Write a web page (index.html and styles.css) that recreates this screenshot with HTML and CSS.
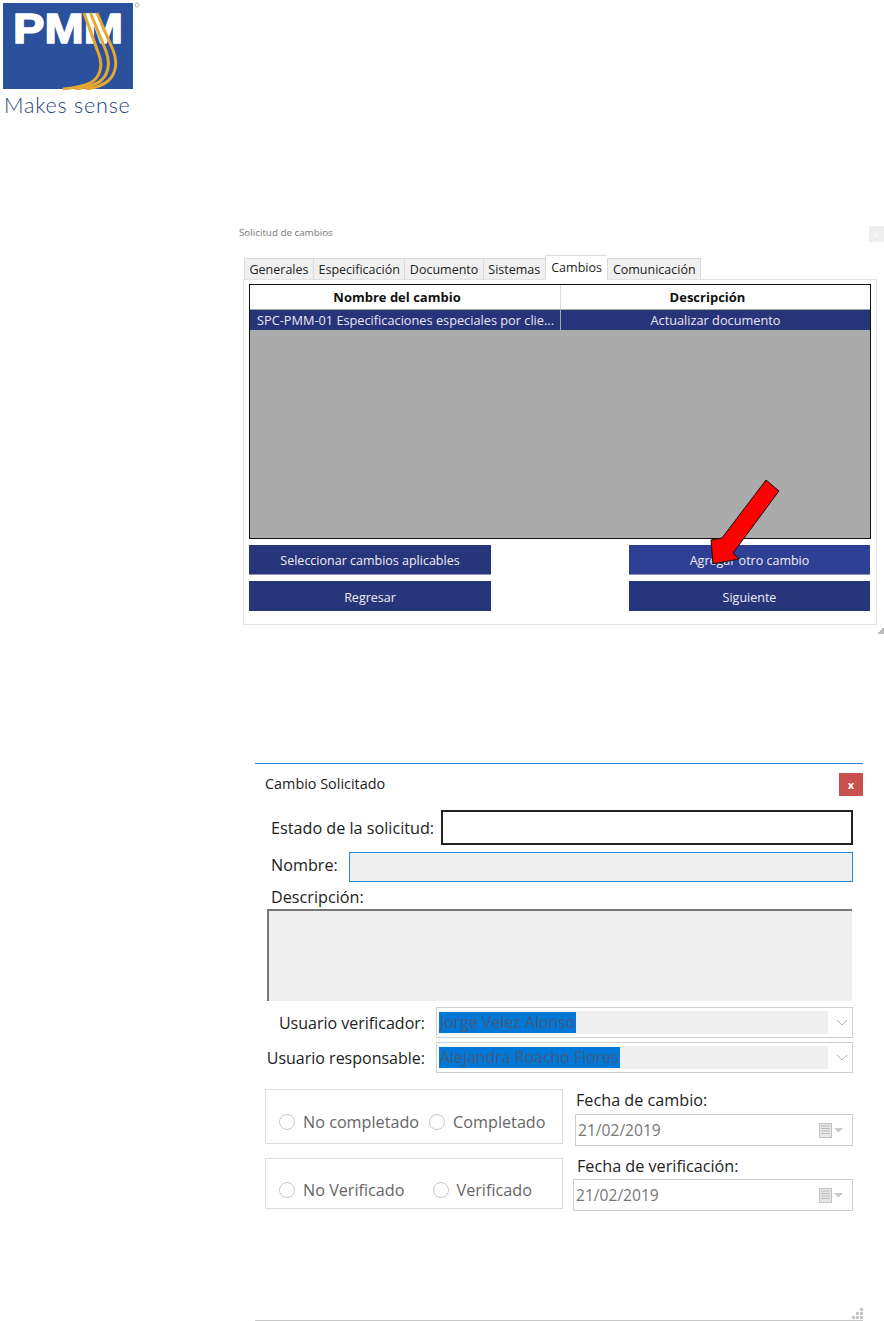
FILE: index.html
```html
<!DOCTYPE html>
<html lang="es">
<head>
<meta charset="UTF-8">
<meta name="viewport" content="width=device-width, initial-scale=1.0">
<title>Solicitud de cambios</title>
<link rel="stylesheet" href="styles.css">
</head>
<body>

<div class="logo">
  <svg class="logo-mark" width="140" height="90" viewBox="0 0 140 90">
    <rect x="3" y="3" width="130" height="86" fill="#2b509c"/>
    <text class="logo-pmm" x="13" y="43" textLength="110" lengthAdjust="spacingAndGlyphs">PMM</text>
    <g fill="none" stroke="#e5a931" stroke-width="3">
      <path d="M84 13 L98 52 C104 66 100 78 90 83 C82 87 72 88 63 89"/>
      <path d="M90.5 13 L106 51 C111 64 108 76 99 82 C92 86 84 88 75 89"/>
      <path d="M97 13 L113 50 C118 62 116 74 108 81 C102 86 94 88 86 89"/>
    </g>
    <circle cx="137" cy="5" r="2" fill="none" stroke="#999" stroke-width="0.7"/>
  </svg>
  <div class="logo-text">Makes sense</div>
</div>

<div class="win-one">
  <div class="win-one-head">
    <span class="win-one-title">Solicitud de cambios</span>
    <span class="win-one-close">x</span>
  </div>
  <div class="tabs">
    <div class="tab">Generales</div>
    <div class="tab">Especificación</div>
    <div class="tab">Documento</div>
    <div class="tab">Sistemas</div>
    <div class="tab active">Cambios</div>
    <div class="tab">Comunicación</div>
  </div>
  <div class="panel">
    <div class="table">
      <div class="table-row table-head">
        <div class="cell">Nombre del cambio</div>
        <div class="cell">Descripción</div>
      </div>
      <div class="table-row table-sel">
        <div class="cell left">SPC-PMM-01 Especificaciones especiales por clie...</div>
        <div class="cell">Actualizar documento</div>
      </div>
    </div>
    <div class="buttons">
      <button class="btn top">Seleccionar cambios aplicables</button>
      <button class="btn top hover">Agregar otro cambio</button>
      <button class="btn low">Regresar</button>
      <button class="btn low">Siguiente</button>
    </div>
  </div>
  <div class="grip-row">
    <svg class="grip" width="6" height="6" viewBox="0 0 6 6"><path d="M4 0h2v2H4zM2 2h2v2H2zM4 2h2v2H4zM0 4h2v2H0zM2 4h2v2H2zM4 4h2v2H4z" fill="#bbb"/></svg>
  </div>
</div>

<svg class="arrow" width="80" height="95" viewBox="705 475 80 95">
  <path d="M766 480 L779 491 L733 553 L739 559 L713 564 L711 540 L722 538 Z" fill="#ff0000" stroke="#111" stroke-width="1"/>
</svg>

<div class="win-two">
  <div class="win-two-head">
    <span class="win-two-title">Cambio Solicitado</span>
    <span class="win-two-close">x</span>
  </div>
  <div class="row row-estado">
    <label class="lbl">Estado de la solicitud:</label>
    <div class="input input-black"></div>
  </div>
  <div class="row row-nombre">
    <label class="lbl">Nombre:</label>
    <div class="input input-blue"></div>
  </div>
  <div class="lbl lbl-desc">Descripción:</div>
  <div class="textarea"></div>
  <div class="row row-combo">
    <label class="lbl lbl-right">Usuario verificador:</label>
    <div class="combo">
      <div class="combo-fill"><span class="combo-sel">Jorge Velez Alonso</span></div>
      <svg class="chevron" width="12" height="7" viewBox="0 0 12 7"><path d="M1 1l5 5 5-5" fill="none" stroke="#b5b5b5"/></svg>
    </div>
  </div>
  <div class="row row-combo second">
    <label class="lbl lbl-right">Usuario responsable:</label>
    <div class="combo">
      <div class="combo-fill"><span class="combo-sel">Alejandra Roacho Flores</span></div>
      <svg class="chevron" width="12" height="7" viewBox="0 0 12 7"><path d="M1 1l5 5 5-5" fill="none" stroke="#b5b5b5"/></svg>
    </div>
  </div>

  <div class="status-row first">
    <div class="group">
      <span class="radio"></span><span class="radio-lbl">No completado</span>
      <span class="radio gap-a"></span><span class="radio-lbl">Completado</span>
    </div>
    <div class="date-col">
      <div class="lbl date-lbl">Fecha de cambio:</div>
      <div class="date">
        <span>21/02/2019</span>
        <svg class="cal" width="25" height="15" viewBox="0 0 25 15"><rect x="0.5" y="0.5" width="12" height="14" fill="#e6e6e6" stroke="#c4c4c4"/><path d="M2 3h9M2 5.500h9M2 8h9M2 10.500h9" stroke="#bdbdbd"/><path d="M15 5h9l-4.500 4.500z" fill="#c8c8c8"/></svg>
      </div>
    </div>
  </div>

  <div class="status-row second">
    <div class="group group-low">
      <span class="radio"></span><span class="radio-lbl">No Verificado</span>
      <span class="radio gap-b"></span><span class="radio-lbl">Verificado</span>
    </div>
    <div class="date-col wide">
      <div class="lbl date-lbl shift">Fecha de verificación:</div>
      <div class="date">
        <span>21/02/2019</span>
        <svg class="cal" width="25" height="15" viewBox="0 0 25 15"><rect x="0.5" y="0.5" width="12" height="14" fill="#e6e6e6" stroke="#c4c4c4"/><path d="M2 3h9M2 5.500h9M2 8h9M2 10.500h9" stroke="#bdbdbd"/><path d="M15 5h9l-4.500 4.500z" fill="#c8c8c8"/></svg>
      </div>
    </div>
  </div>

  <div class="win-two-foot">
    <svg class="grip" width="11" height="11" viewBox="0 0 11 11"><path d="M8 0h3v3H8zM4 4h3v3H4zM8 4h3v3H8zM0 8h3v3H0zM4 8h3v3H4zM8 8h3v3H8z" fill="#c4c4c4"/></svg>
  </div>
</div>

</body>
</html>
```

FILE: styles.css
```css
html, body {
  margin: 0;
  background-color: white;
}
body {
  position: relative;
  width: 884px;
  height: 1321px;
  overflow: hidden;
  font-family: "Open Sans", "Noto Sans", sans-serif;
  color: #222;
}

/* logo */
.logo {
  height: 226px;
}
.logo-mark {
  display: block;
}
.logo-pmm {
  font-family: "Liberation Sans", sans-serif;
  font-weight: bold;
  font-size: 42px;
  fill: white;
  stroke: white;
  stroke-width: 1.5px;
}
.logo-text {
  margin: 3px 0 0 4px;
  font-family: "Lato", sans-serif;
  font-size: 21.5px;
  font-weight: 300;
  line-height: 24px;
  letter-spacing: 0.8px;
  color: #1f3f78;
  white-space: nowrap;
}

/* first window */
.win-one {
  width: 645px;
  margin-left: 239px;
}
.win-one-head {
  display: flex;
  justify-content: space-between;
  align-items: flex-start;
  height: 16px;
}
.win-one-title {
  font-size: 9.8px;
  line-height: 13px;
  color: #777;
}
.win-one-close {
  width: 15px;
  height: 16px;
  background-color: #eeeeee;
  color: white;
  font-size: 8px;
  line-height: 16px;
  text-align: center;
}
.tabs {
  display: flex;
  align-items: flex-end;
  height: 21px;
  margin: 16px 0 0 5px;
}
.tab {
  height: 20px;
  padding: 0 4.5px;
  border: 1px solid #dadada;
  border-bottom: none;
  border-right: none;
  background-color: #f0f0f0;
  font-size: 12.5px;
  line-height: 21px;
  white-space: nowrap;
}
.tab:last-child {
  border-right: 1px solid #dadada;
}
.tab.active {
  height: 24px;
  padding: 0 5.5px;
  margin-bottom: -1px;
  background-color: white;
  line-height: 24px;
  position: relative;
}
.panel {
  box-sizing: border-box;
  width: 634px;
  height: 346px;
  margin-left: 4px;
  padding: 4px 5px;
  border: 1px solid #e2e2e2;
}
.table {
  box-sizing: border-box;
  width: 622px;
  height: 255px;
  border: 1px solid #111;
  background-color: #ababab;
}
.table-row {
  display: grid;
  grid-template-columns: 311px 1fr;
  font-size: 12.75px;
  text-align: center;
}
.table-head {
  height: 24px;
  line-height: 24px;
  background-color: white;
  border-bottom: 1px solid #a5a5a5;
  font-size: 13px;
  font-weight: bold;
  color: #111;
}
.table-head .cell {
  padding-right: 16px;
}
.table-head .cell:first-child {
  border-right: 1px solid #ddd;
}
.table-sel {
  height: 20px;
  line-height: 20px;
  background-color: #27347a;
  color: #e8e8f4;
}
.table-sel .cell:first-child {
  border-right: 1px solid #9aa;
}
.cell.left {
  padding-left: 7px;
  text-align: left;
  white-space: nowrap;
  overflow: hidden;
}
.buttons {
  display: grid;
  grid-template-columns: 242px 241px;
  justify-content: space-between;
  row-gap: 6px;
  width: 621px;
  margin-top: 6px;
}
.btn {
  height: 30px;
  padding: 0;
  border: none;
  background-color: #27357a;
  color: #eeeef6;
  font-family: inherit;
  font-size: 12.5px;
}
.btn.top {
  padding-top: 1px;
  border-bottom: 1px solid #8d93c2;
}
.btn.low {
  padding-top: 2px;
}
.btn.hover {
  background-color: #2e3f94;
}
.grip-row {
  display: flex;
  justify-content: flex-end;
  margin-top: 3px;
}
.arrow {
  position: absolute;
  left: 705px;
  top: 475px;
}

/* second window */
.win-two {
  box-sizing: border-box;
  width: 608px;
  height: 558px;
  margin: 129px 0 0 255px;
  border-top: 1px solid #2a80d0;
  border-bottom: 1px solid #c8c8c8;
  position: relative;
}
.win-two-head {
  display: flex;
  justify-content: space-between;
  align-items: center;
  height: 23px;
  padding: 9px 0 0 10px;
}
.win-two-title {
  margin-bottom: 3px;
  font-size: 14.4px;
}
.win-two-close {
  width: 24px;
  height: 23px;
  background-color: #c9504f;
  color: white;
  font-size: 11px;
  font-weight: bold;
  line-height: 23px;
  text-align: center;
}
.lbl {
  font-size: 16.2px;
  white-space: nowrap;
}
.row {
  display: flex;
  align-items: center;
  padding-left: 16px;
  padding-right: 10px;
}
.row .input, .row .combo {
  margin-left: auto;
}
.row-estado {
  height: 35px;
  margin-top: 14px;
}
.row-nombre {
  height: 30px;
  margin-top: 7px;
}
.row-nombre .lbl {
  margin-bottom: 4px;
}
.input {
  box-sizing: border-box;
  height: 100%;
}
.input-black {
  width: 412px;
  border: 2px solid #222;
  background-color: white;
}
.input-blue {
  width: 504px;
  border: 1px solid #2b8ad6;
  background-color: #efefef;
}
.lbl-desc {
  height: 18px;
  margin: 6px 0 0 16px;
  line-height: 18px;
}
.textarea {
  box-sizing: border-box;
  width: 585px;
  height: 92px;
  margin: 3px 0 0 12px;
  border-top: 2px solid #777;
  border-left: 2px solid #777;
  background-color: #efefef;
}
.row-combo {
  height: 31px;
  margin-top: 6px;
}
.row-combo.second {
  margin-top: 4px;
}
.lbl-right {
  width: 159px;
  margin-left: -5px;
  font-size: 16px;
  text-align: right;
}
.combo {
  display: flex;
  align-items: center;
  box-sizing: border-box;
  width: 417px;
  height: 100%;
  padding: 3px 0 3px 2px;
  border: 1px solid #d0d0d0;
  background-color: white;
}
.combo-fill {
  display: flex;
  align-items: center;
  width: 389px;
  height: 100%;
  background-color: #efefef;
}
.combo-sel {
  padding: 0 1px;
  background-color: #0078d7;
  color: #44597c;
  font-size: 15.9px;
  line-height: 21px;
  white-space: nowrap;
}
.chevron {
  margin-left: 8px;
}
.status-row {
  display: flex;
  padding-left: 10px;
}
.status-row.first {
  margin-top: 16px;
}
.status-row.second {
  margin-top: 12px;
}
.group {
  display: flex;
  align-items: center;
  box-sizing: border-box;
  width: 298px;
  height: 55px;
  padding: 11px 0 0 13px;
  border: 1px solid #dcdcdc;
  flex-shrink: 0;
}
.group-low {
  height: 51px;
  padding-top: 13px;
}
.radio {
  box-sizing: border-box;
  width: 16px;
  height: 16px;
  margin-right: 8px;
  border: 1px solid #c8c8c8;
  border-radius: 50%;
  flex-shrink: 0;
}
.radio.gap-a {
  margin-left: 10px;
}
.radio.gap-b {
  margin-left: 28px;
}
.radio-lbl {
  color: #666;
  font-size: 16.2px;
  white-space: nowrap;
}
.date-col {
  box-sizing: border-box;
  width: 278px;
  margin-left: 12px;
}
.date-col.wide {
  width: 280px;
  margin-left: 10px;
}
.date-lbl {
  height: 25px;
  line-height: 22px;
  margin-left: 1px;
}
.date-lbl.shift {
  height: 24px;
  margin-top: -3px;
  margin-left: 4px;
}
.date {
  display: flex;
  align-items: center;
  justify-content: space-between;
  box-sizing: border-box;
  height: 32px;
  padding: 0 8px 0 2px;
  border: 1px solid #cfcfcf;
  color: #777;
  font-size: 15.6px;
}
.cal {
  display: block;
}
.win-two-foot {
  position: absolute;
  right: 0;
  bottom: 1px;
}
.grip {
  display: block;
}
```
